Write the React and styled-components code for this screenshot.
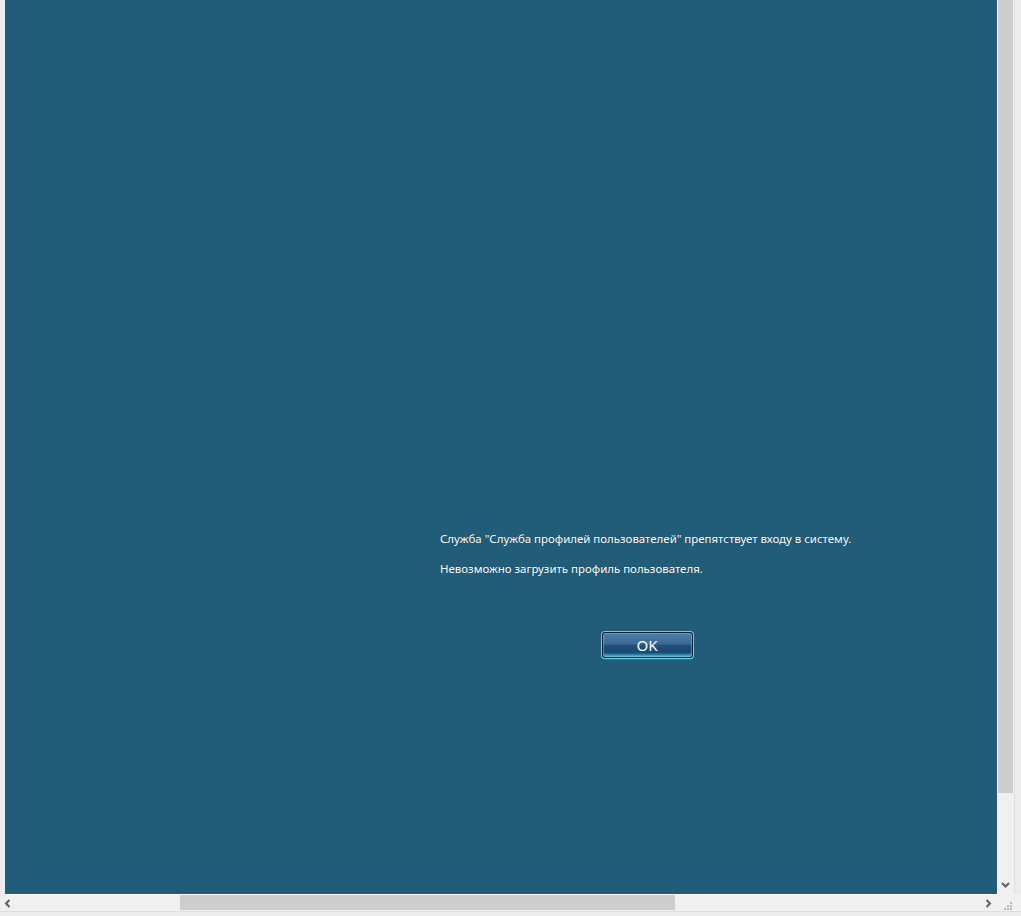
import React from "react";
import styled, { createGlobalStyle } from "styled-components";

const GlobalStyle = createGlobalStyle`
  html, body {
    margin: 0;
    padding: 0;
    overflow: hidden;
    background: #f0f0f0;
  }
`;

const Frame = styled.div`
  width: 1021px;
  height: 916px;
  display: flex;
  flex-direction: column;
  background: #f0f0f0;
`;

const MainRow = styled.div`
  flex: 1;
  display: flex;
  min-height: 0;
`;

const LeftEdge = styled.div`
  width: 5px;
  background: #ececec;
`;

const Viewport = styled.div`
  flex: 1;
  background: #215c78;
  padding: 530px 0 0 435px;
  box-sizing: border-box;
  font-family: "Noto Sans", "Open Sans", sans-serif;
  color: #ffffff;
`;

const Message = styled.p`
  margin: 0 0 13px 0;
  font-size: 11.45px;
  line-height: 17px;
  text-shadow: 0 0 1px rgba(0, 0, 0, 0.35);
`;

const ButtonRow = styled.div`
  width: 414px;
  display: flex;
  justify-content: center;
  padding-top: 42px;
`;

const OkButton = styled.button`
  width: 91px;
  height: 26px;
  border: 1px solid #0c2233;
  border-radius: 3px;
  color: #ffffff;
  font-family: "Noto Sans", "Open Sans", sans-serif;
  font-size: 15px;
  line-height: 22px;
  padding: 0;
  background: linear-gradient(
    to bottom,
    #4f7fa8 0%,
    #3b6b95 45%,
    #22507c 52%,
    #1d4873 80%,
    #3a8db0 100%
  );
  box-shadow: inset 0 0 0 1px rgba(150, 200, 230, 0.35),
    inset 0 -2px 2px rgba(90, 220, 240, 0.55), 0 0 0 1px #52d6ea,
    0 1px 2px rgba(79, 216, 236, 0.7);
`;

const VScroll = styled.div`
  width: 17px;
  background: #f0f0f0;
  border-left: 1px solid #fafafa;
  box-sizing: border-box;
  display: flex;
  flex-direction: column;
  padding: 0 1px 0 0;
`;

const VThumb = styled.div`
  height: 793px;
  background: #cdcdcd;
`;

const VArrow = styled.div`
  margin-top: auto;
  height: 17px;
  display: flex;
  align-items: center;
  justify-content: center;
`;

const RightEdge = styled.div`
  width: 7px;
  border-left: 1px solid #dedede;
  background: #ececec;
  box-sizing: border-box;
`;

const BottomRow = styled.div`
  height: 17px;
  display: flex;
`;

const HScroll = styled.div`
  width: 997px;
  display: flex;
  align-items: stretch;
  background: #f0f0f0;
  border-top: 1px solid #fafafa;
  box-sizing: border-box;
`;

const HArrow = styled.div`
  width: 17px;
  display: flex;
  align-items: center;
  justify-content: center;
`;

const HTrack = styled.div`
  flex: 1;
  padding: 0 0 1px 163px;
  display: flex;
`;

const HThumb = styled.div`
  width: 495px;
  background: #cdcdcd;
`;

const Corner = styled.div`
  flex: 1;
  display: flex;
  align-items: flex-end;
  justify-content: flex-end;
  padding: 0 9px 1px 0;
`;

const BottomEdge = styled.div`
  height: 4px;
  border-top: 1px solid #dedede;
  background: #ececec;
`;

const Chevron = ({ dir }) => {
  const paths = {
    down: "M1 2 L4.5 5.5 L8 2",
    left: "M5.5 1 L2 4.5 L5.5 8",
    right: "M2.5 1 L6 4.5 L2.5 8",
  };
  return (
    <svg width="9" height="9" viewBox="0 0 9 9">
      <path d={paths[dir]} fill="none" stroke="#606060" strokeWidth="2" />
    </svg>
  );
};

const Grip = () => (
  <svg width="8" height="8" viewBox="0 0 8 8">
    {[
      [6, 0],
      [3, 3],
      [6, 3],
      [0, 6],
      [3, 6],
      [6, 6],
    ].map(([x, y]) => (
      <rect key={`${x}${y}`} x={x} y={y} width="2" height="2" fill="#b8b8b8" />
    ))}
  </svg>
);

export default function App() {
  return (
    <Frame>
      <GlobalStyle />
      <MainRow>
        <LeftEdge />
        <Viewport>
          <Message>
            Служба "Служба профилей пользователей" препятствует входу в систему.
          </Message>
          <Message>Невозможно загрузить профиль пользователя.</Message>
          <ButtonRow>
            <OkButton>OK</OkButton>
          </ButtonRow>
        </Viewport>
        <VScroll>
          <VThumb />
          <VArrow>
            <Chevron dir="down" />
          </VArrow>
        </VScroll>
        <RightEdge />
      </MainRow>
      <BottomRow>
        <HScroll>
          <HArrow>
            <Chevron dir="left" />
          </HArrow>
          <HTrack>
            <HThumb />
          </HTrack>
          <HArrow>
            <Chevron dir="right" />
          </HArrow>
        </HScroll>
        <Corner>
          <Grip />
        </Corner>
      </BottomRow>
      <BottomEdge />
    </Frame>
  );
}
